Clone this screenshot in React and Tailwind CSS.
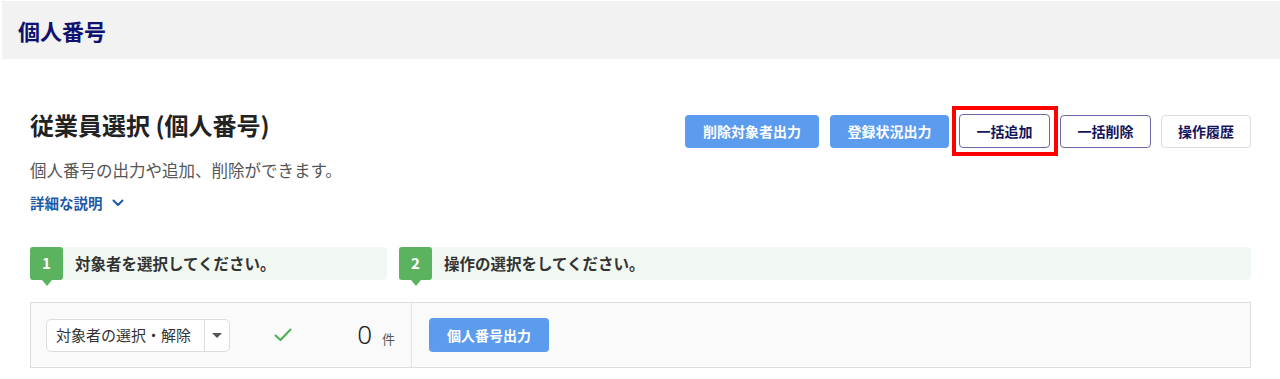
import React from "react";

const font = { fontFamily: '"Noto Sans CJK JP", "Noto Sans", sans-serif' };

function Step({ n, text, className }) {
  return (
    <div className={"flex items-center h-[33px] bg-[#f1f8f1] rounded-r-[4px] " + className}>
      <div className="relative w-[33px] h-[33px] bg-[#5cb35f] rounded-[3px] flex items-center justify-center text-white font-bold text-[15px]">
        {n}
        <span className="absolute left-1/2 -translate-x-1/2 top-full w-0 h-0 border-l-[5px] border-r-[5px] border-t-[6px] border-l-transparent border-r-transparent border-t-[#5cb35f]" />
      </div>
      <span className="ml-[12px] text-[15.5px] font-bold text-[#333]">{text}</span>
    </div>
  );
}

export default function App() {
  return (
    <div className="w-[1280px] h-[379px] bg-white overflow-hidden" style={font}>
      <div className="ml-[2px] mt-[1px] h-[58px] bg-[#f2f2f2] flex items-center pl-[16px]">
        <h1 className="text-[22px] font-bold text-[#101070] leading-none">個人番号</h1>
      </div>

      <div className="pl-[30px] pr-[29px]">
        <div className="flex justify-between items-start mt-[55px]">
          <div>
            <h2 className="text-[24px] font-bold text-[#222] leading-[26px] mt-[-2px]">従業員選択 (個人番号)</h2>
            <p className="mt-[20px] text-[16.5px] text-[#555] leading-[24px]">個人番号の出力や追加、削除ができます。</p>
            <div className="mt-[11px] flex items-center text-[14.5px] font-bold text-[#1e5aa8] leading-[20px]">
              詳細な説明
              <svg className="ml-[9px]" width="12" height="8" viewBox="0 0 12 8" fill="none">
                <path d="M1.5 1.5 L6 6 L10.5 1.5" stroke="#1e5aa8" strokeWidth="2" strokeLinecap="round" strokeLinejoin="round" />
              </svg>
            </div>
          </div>
          <div className="flex items-center">
            <button className="w-[134px] h-[33px] rounded-[4px] bg-[#5c9cef] text-white text-[14px] font-bold">削除対象者出力</button>
            <button className="ml-[11px] w-[119px] h-[33px] rounded-[4px] bg-[#5c9cef] text-white text-[14px] font-bold">登録状況出力</button>
            <div className="relative ml-[10px]">
              <span className="absolute -left-[7px] -right-[8px] -top-[8px] -bottom-[8px] border-4 border-[#ff0000]" />
              <button className="relative w-[91px] h-[34px] rounded-[4px] border border-[#6a6aa8] bg-white text-[#14145a] text-[14px] font-bold">一括追加</button>
            </div>
            <button className="ml-[10px] w-[91px] h-[33px] rounded-[4px] border border-[#6a6aa8] bg-white text-[#14145a] text-[14px] font-bold">一括削除</button>
            <button className="ml-[10px] w-[90px] h-[33px] rounded-[4px] border border-[#dcdcdc] bg-white text-[#14145a] text-[14px] font-bold">操作履歴</button>
          </div>
        </div>

        <div className="mt-[34px] flex gap-[12px]">
          <Step n="1" text="対象者を選択してください。" className="w-[357px]" />
          <Step n="2" text="操作の選択をしてください。" className="flex-1" />
        </div>

        <div className="mt-[22px] flex h-[66px] border border-[#dddddd] bg-[#fafafa]">
          <div className="w-[381px] border-r border-[#e4e4e4] flex items-center pl-[15px] pr-[16px]">
            <div className="flex h-[33px] bg-white border border-[#dddddd] rounded-[5px]">
              <div className="w-[157px] flex items-center pl-[9px] text-[15px] text-[#333]">対象者の選択・解除</div>
              <div className="w-[25px] border-l border-[#dddddd] flex items-center justify-center">
                <span className="w-0 h-0 border-l-[5px] border-r-[5px] border-t-[5px] border-l-transparent border-r-transparent border-t-[#555]" />
              </div>
            </div>
            <svg className="ml-[44px]" width="18" height="14" viewBox="0 0 18 14" fill="none">
              <path d="M1.5 7.5 L6.5 12 L16.5 1.5" stroke="#4caf50" strokeWidth="2" strokeLinecap="round" strokeLinejoin="round" />
            </svg>
            <div className="ml-auto flex items-baseline">
              <span className="text-[26px] text-[#222] font-light leading-none" style={{ fontFamily: '"Noto Sans", sans-serif' }}>0</span>
              <span className="ml-[10px] text-[13px] text-[#555]">件</span>
            </div>
          </div>
          <div className="flex-1 flex items-center pl-[17px]">
            <button className="w-[120px] h-[34px] rounded-[4px] bg-[#5c9cef] text-white text-[14px] font-bold">個人番号出力</button>
          </div>
        </div>
      </div>
    </div>
  );
}
